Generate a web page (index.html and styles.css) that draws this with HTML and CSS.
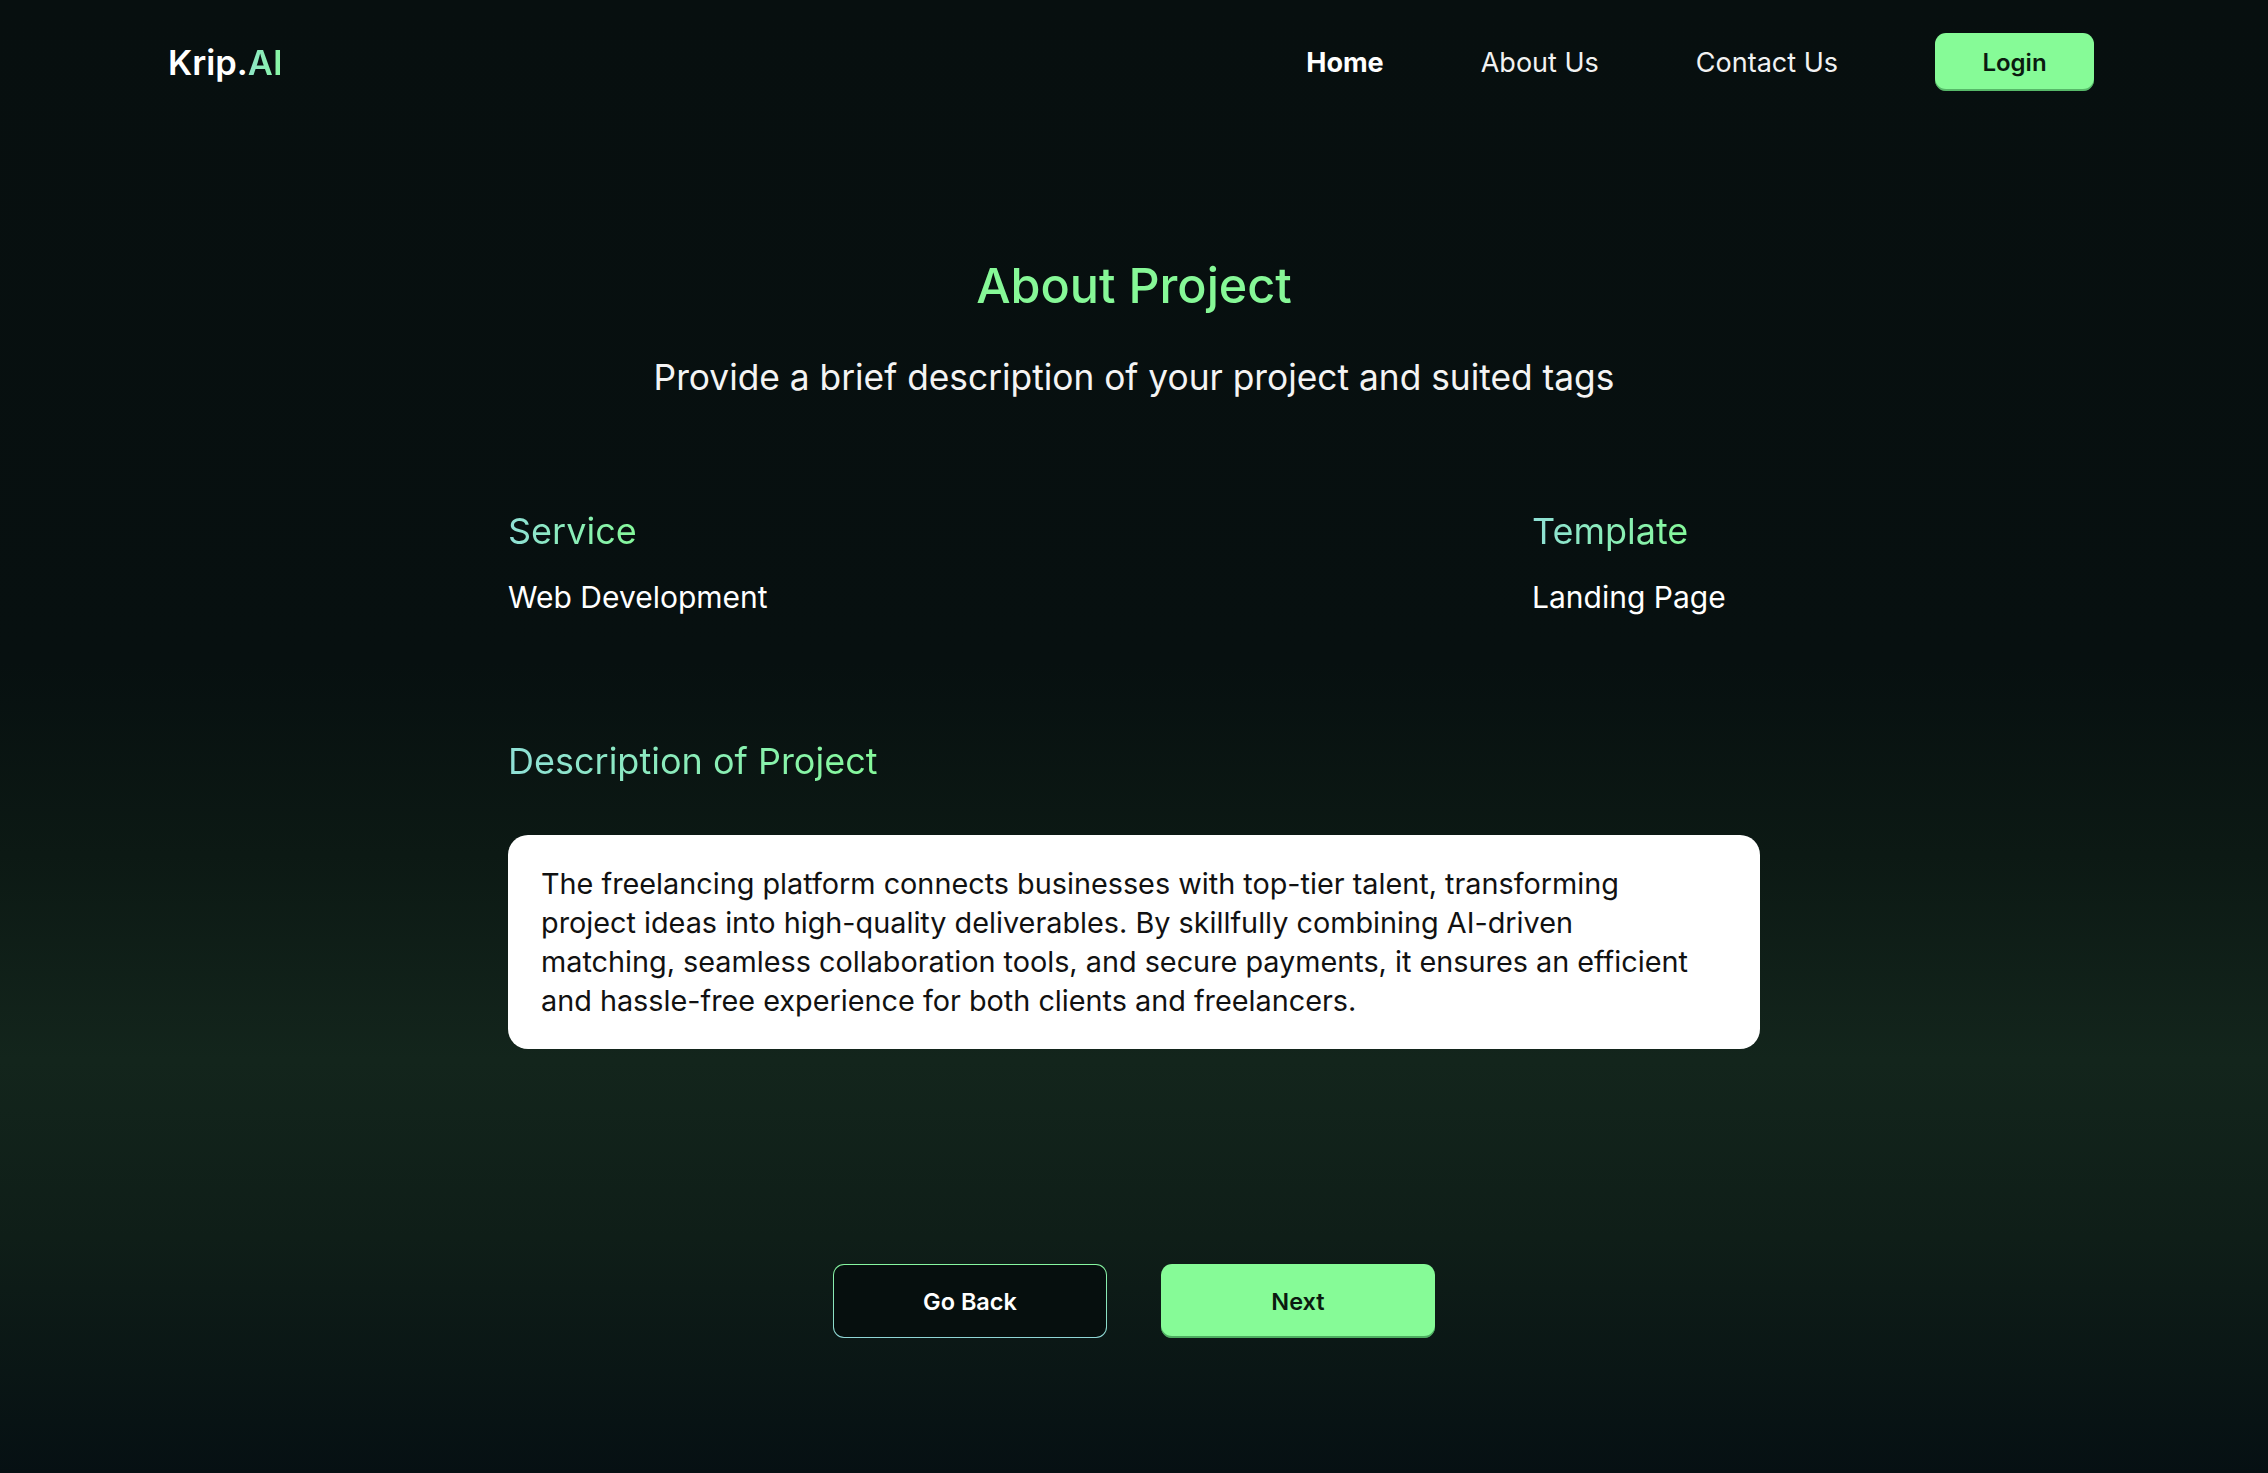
FILE: index.html
```html
<!DOCTYPE html>
<html lang="en">
<head>
<meta charset="utf-8">
<title>Krip.AI – About Project</title>
<link rel="stylesheet" href="styles.css">
</head>
<body>
<header class="topbar">
  <div class="logo">Krip.<span class="logo-ai">AI</span></div>
  <nav class="nav">
    <a class="nav-link nav-active" href="#">Home</a>
    <a class="nav-link" href="#">About Us</a>
    <a class="nav-link" href="#">Contact Us</a>
    <a class="btn-login" href="#">Login</a>
  </nav>
</header>
<main class="content">
  <h1 class="title">About Project</h1>
  <p class="subtitle">Provide a brief description of your project and suited tags</p>
  <section class="meta">
    <div class="meta-col">
      <h2 class="label">Service</h2>
      <p class="value">Web Development</p>
    </div>
    <div class="meta-col">
      <h2 class="label">Template</h2>
      <p class="value">Landing Page</p>
    </div>
  </section>
  <h2 class="label desc-label">Description of Project</h2>
  <div class="desc-box"><p class="desc-text">The freelancing platform connects businesses with top-tier talent, transforming project ideas into high-quality deliverables. By skillfully combining AI-driven matching, seamless collaboration tools, and secure payments, it ensures an efficient and hassle-free experience for both clients and freelancers.</p></div>
  <div class="actions">
    <a class="btn btn-back" href="#">Go Back</a>
    <a class="btn btn-next" href="#">Next</a>
  </div>
</main>
</body>
</html>
```
FILE: styles.css
```css
html, body { margin: 0; padding: 0; }
body {
  min-height: 1473px;
  background: linear-gradient(180deg, #070f0f 0%, #071010 45%, #0c1914 58%, #13251c 72%, #0f1e18 84%, #061013 100%);
  font-family: Inter, "Noto Sans", sans-serif;
  color: #ffffff;
}
a { text-decoration: none; color: inherit; }
h1, h2, p { margin: 0; font-weight: inherit; }

.topbar {
  height: 124px;
  display: flex;
  align-items: center;
  justify-content: space-between;
  padding: 0 174px 0 168px;
}
.logo { font-size: 34.5px; font-weight: 600; }
.logo-ai {
  background: linear-gradient(90deg, #8fe6c8, #86f7a0);
  -webkit-background-clip: text; background-clip: text; color: transparent;
}
.nav { display: flex; align-items: center; gap: 97px; }
.nav-link { font-size: 27px; font-weight: 400; color: #f2f2f2; }
.nav-active { font-weight: 700; color: #fff; }
.btn-login {
  width: 159px; height: 58px;
  display: flex; align-items: center; justify-content: center;
  background: #86fb97; color: #0b1a10;
  border-radius: 11px; font-size: 24px; font-weight: 600;
  box-shadow: inset 0 -2px 0 rgba(40,120,60,0.5);
}

.content { width: 1252px; margin: 0 auto; padding-top: 132px; }
.title { text-align: center; font-size: 48.5px; line-height: 60px; font-weight: 500; color: #86f897; }
.subtitle { text-align: center; margin-top: 40px; font-size: 35.3px; line-height: 44px; color: #f4f4f4; }

.meta { display: grid; grid-template-columns: 1024px 1fr; margin-top: 109px; }
.label {
  font-size: 36px; line-height: 44px; font-weight: 400;
  background: linear-gradient(90deg, #8fe0d6 0%, #85f99a 100%);
  -webkit-background-clip: text; background-clip: text; color: transparent;
  width: max-content;
}
.value { margin-top: 24px; font-size: 30px; line-height: 40px; color: #fff; }
.desc-label { margin-top: 122px; }
.desc-box {
  margin-top: 52px;
  background: #fff; color: #111;
  border-radius: 20px;
  padding: 29px 33px;
}
.desc-text { max-width: 1152px; font-size: 28.8px; line-height: 39px; }
.actions { display: flex; justify-content: center; gap: 54px; margin-top: 215px; }
.btn {
  width: 274px; height: 74px; box-sizing: border-box;
  display: flex; align-items: center; justify-content: center;
  border-radius: 11px; font-size: 23.5px; font-weight: 600;
}
.btn-back {
  color: #fff;
  border: 1.5px solid transparent;
  background: linear-gradient(#060f0e, #060f0e) padding-box, linear-gradient(180deg, #86f7a0, #8fd6d6) border-box;
}
.btn-next { background: #86fb97; color: #0b1a10; box-shadow: inset 0 -2px 0 rgba(40,120,60,0.6); }
```
